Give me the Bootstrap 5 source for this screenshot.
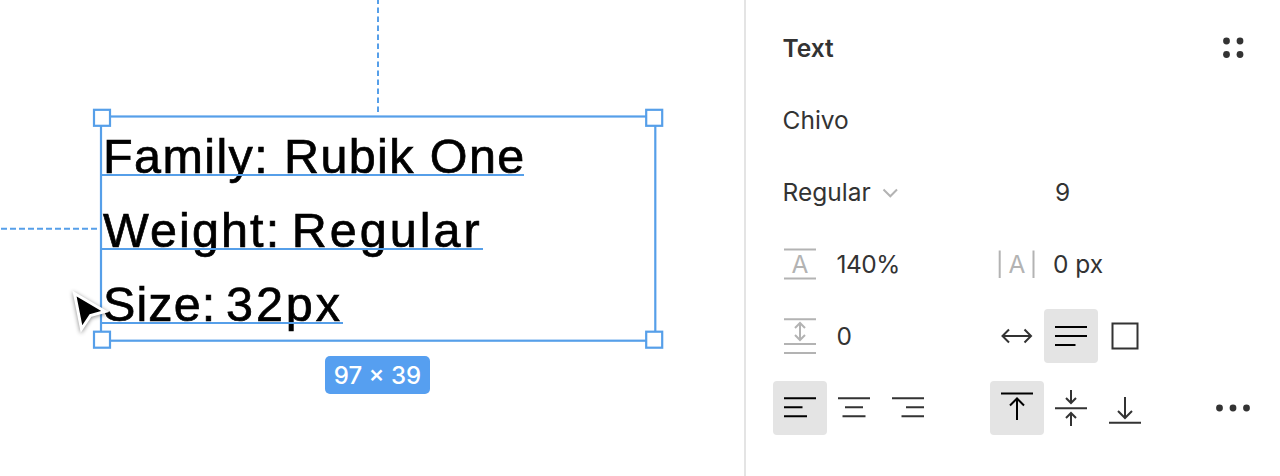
<!DOCTYPE html>
<html lang="en">
<head>
<meta charset="utf-8">
<meta name="viewport" content="width=device-width, initial-scale=1">
<title>Text properties</title>
<link href="https://cdn.jsdelivr.net/npm/bootstrap@5.3.0/dist/css/bootstrap.min.css" rel="stylesheet">
<style>
  body { height: 476px; font-family: Inter, sans-serif; font-size: 24.5px; color: #333; background: #fff; }
  .board { width: 744px; }
  .board svg { left: 0; top: 0; }
  .text-layer { left: 102px; top: 119px; font-family: "Liberation Sans", sans-serif; font-size: 48.5px; line-height: 75px; color: #000; -webkit-text-stroke: .7px #000; }
  .text-line { height: 74px; white-space: pre; padding-left: 1px; }
  .text-line::after { content: ""; position: absolute; left: 0; right: 0; top: 54.5px; height: 2px; background: #569fe9; }
  .line-a { width: 422px; letter-spacing: 1.4px; }
  .line-b { width: 381px; letter-spacing: 2.1px; word-spacing: -5px; }
  .line-b span { letter-spacing: 3px; }
  .line-c { width: 241px; letter-spacing: 1.1px; word-spacing: -5px; }
  .line-c span { letter-spacing: 3px; }
  .size-tag { left: 325px; top: 356px; width: 105px; height: 38px; padding-top: 2px; border-radius: 5px; background: #569ff0; color: #fff; font-size: 24px; font-weight: 500; white-space: nowrap; }
  .props { border-left: 2px solid #e4e4e4; padding: 12px 20px 0 27.5px; }
  .prop-row { height: 72px; }
  .col-first { width: 216.5px; }
  .label-pad { padding-left: 9px; }
  .tool { width: 54px; height: 54px; border-radius: 4px; flex: none; }
  .tool.active { background: #e4e4e4; color: #000; }
  .tool svg, .glyph { width: 54px; height: 54px; display: block; flex: none; }
  .props svg { fill: none; stroke: currentColor; stroke-width: 2; }
  .col-first .glyph, .col-first .tool { margin-left: -.5px; margin-right: .5px; }
  .muted-icon { color: #b3b3b3; }
  .props svg .dots { fill: currentColor; stroke: none; }
  .props svg text { font-size: 24.5px; fill: currentColor; stroke: none; text-anchor: middle; }
  .value { padding-left: 9px; }
  .value-tight { letter-spacing: -.5px; }
</style>
</head>
<body class="d-flex overflow-hidden m-0">
<main class="board position-relative flex-shrink-0">
  <div class="text-layer position-absolute">
    <div class="text-line line-a position-relative">Family: Rubik One</div>
    <div class="text-line line-b position-relative">Weight: <span>Regular</span></div>
    <div class="text-line line-c position-relative">Size: <span>32px</span></div>
  </div>
  <svg class="position-absolute" width="744" height="476" fill="none" stroke="#569fe9" stroke-width="2.2">
    <path d="M378 0V112" stroke-width="2" stroke-dasharray="5.4 3.6" stroke-dashoffset="1.5"/>
    <path d="M1 228.7H97" stroke-width="2" stroke-dasharray="6 3"/>
    <rect x="101" y="116.5" width="554.3" height="224.2"/>
    <g fill="#fff"><rect x="94" y="109.8" width="16" height="16"/><rect x="646.2" y="109.8" width="16" height="16"/><rect x="94" y="331.7" width="16" height="16"/><rect x="646.2" y="331.7" width="16" height="16"/></g>
    <path d="M74.500 293.500L105 311.500L90.500 315.500L81.500 329Z" fill="#000" stroke="#fff" stroke-width="3" style="filter:drop-shadow(0 1px 2px #0007)"/>
  </svg>
  <div class="size-tag position-absolute d-flex align-items-center justify-content-center">97 × 39</div>
</main>
<aside class="props flex-grow-1">
  <div class="prop-row d-flex align-items-center justify-content-between">
    <span class="label-pad fw-semibold">Text</span>
    <svg class="glyph" viewBox="0 0 54 54"><g class="dots"><circle cx="20.500" cy="20" r="3.400"/><circle cx="34" cy="20" r="3.400"/><circle cx="20.500" cy="33.500" r="3.400"/><circle cx="34" cy="33.500" r="3.400"/></g></svg>
  </div>
  <div class="prop-row d-flex align-items-center"><span class="label-pad">Chivo</span></div>
  <div class="prop-row d-flex align-items-center">
    <div class="col-first label-pad d-flex align-items-center"><span>Regular</span>
      <svg class="muted-icon" style="margin-left:7px" width="24" height="24"><path d="M5.500 9.500L12.300 16.300L19 9.500"/></svg></div>
    <span style="padding-left:65px">9</span>
  </div>
  <div class="prop-row d-flex align-items-center">
    <div class="col-first d-flex align-items-center">
      <svg class="glyph muted-icon" viewBox="0 0 54 54"><path d="M11 12.400H43M11 41.600H43"/><text x="27" y="36">A</text></svg><span class="value value-tight">140%</span></div>
    <svg class="glyph muted-icon" viewBox="0 0 54 54"><path d="M9.700 13.500V41M43.500 13.500V41"/><text x="27" y="36">A</text></svg><span class="value">0 px</span>
  </div>
  <div class="prop-row d-flex align-items-center">
    <div class="col-first d-flex align-items-center">
      <svg class="glyph muted-icon" viewBox="0 0 54 54"><path d="M11 10.200H43M11 35H43M11 44H43M27 14V31M22 19L27 14L32 19M22 26L27 31L32 26"/></svg><span class="value">0</span></div>
    <div class="tool"><svg viewBox="0 0 54 54"><path d="M12.500 27H41M19 20.500L12.500 27L19 33.500M34.500 20.500L41 27L34.500 33.500"/></svg></div>
    <div class="tool active"><svg viewBox="0 0 54 54"><path d="M11 18H43M11 27H43M11 36H31.500"/></svg></div>
    <div class="tool"><svg viewBox="0 0 54 54"><rect x="14.500" y="14.500" width="25" height="25"/></svg></div>
  </div>
  <div class="prop-row d-flex align-items-center">
    <div class="col-first d-flex">
      <div class="tool active"><svg viewBox="0 0 54 54"><path d="M11 17.300H43M11 26.300H29.500M11 35.300H34"/></svg></div>
      <div class="tool"><svg viewBox="0 0 54 54"><path d="M11 17.300H43M18 26.300H36M15.500 35.300H38.500"/></svg></div>
      <div class="tool"><svg viewBox="0 0 54 54"><path d="M11 17.300H43M25 26.300H43M20.500 35.300H43"/></svg></div>
    </div>
    <div class="tool active"><svg viewBox="0 0 54 54"><path d="M11 12.500H43M27 39V17.500M20 24.500L27 17.500L34 24.500"/></svg></div>
    <div class="tool"><svg viewBox="0 0 54 54"><path d="M11 27.200H43M27 9V22M22 17L27 22L32 17M27 45V32M22 37L27 32L32 37"/></svg></div>
    <div class="tool"><svg viewBox="0 0 54 54"><path d="M11 41.700H43M27 16V37M20 30L27 37L34 30"/></svg></div>
    <svg class="glyph ms-auto" viewBox="0 0 54 54"><g class="dots"><circle cx="13.500" cy="27" r="3.400"/><circle cx="27" cy="27" r="3.400"/><circle cx="40.500" cy="27" r="3.400"/></g></svg>
  </div>
</aside>
<script src="https://cdn.jsdelivr.net/npm/bootstrap@5.3.0/dist/js/bootstrap.bundle.min.js"></script>
</body>
</html>
